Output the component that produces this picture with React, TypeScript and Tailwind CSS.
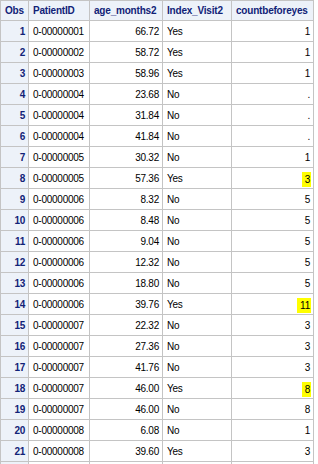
import React from 'react'

type Row = [number, string, string, string, string, boolean?]

const rows: Row[] = [
  [1, '0-00000001', '66.72', 'Yes', '1'],
  [2, '0-00000002', '58.72', 'Yes', '1'],
  [3, '0-00000003', '58.96', 'Yes', '1'],
  [4, '0-00000004', '23.68', 'No', '.'],
  [5, '0-00000004', '31.84', 'No', '.'],
  [6, '0-00000004', '41.84', 'No', '.'],
  [7, '0-00000005', '30.32', 'No', '1'],
  [8, '0-00000005', '57.36', 'Yes', '3', true],
  [9, '0-00000006', '8.32', 'No', '5'],
  [10, '0-00000006', '8.48', 'No', '5'],
  [11, '0-00000006', '9.04', 'No', '5'],
  [12, '0-00000006', '12.32', 'No', '5'],
  [13, '0-00000006', '18.80', 'No', '5'],
  [14, '0-00000006', '39.76', 'Yes', '11', true],
  [15, '0-00000007', '22.32', 'No', '3'],
  [16, '0-00000007', '27.36', 'No', '3'],
  [17, '0-00000007', '41.76', 'No', '3'],
  [18, '0-00000007', '46.00', 'Yes', '8', true],
  [19, '0-00000007', '46.00', 'No', '8'],
  [20, '0-00000008', '6.08', 'No', '1'],
  [21, '0-00000008', '39.60', 'Yes', '3'],
]

const cell = 'flex items-center border-r border-b border-[#c4c4c4]'
const head = `${cell} h-[20px] bg-[#edf2f9] text-[#112277] font-bold pl-[4px] tracking-[-0.2px]`

export default function App() {
  return (
    <div className="bg-white w-[318px] h-[464px] overflow-hidden" style={{ fontFamily: '"Liberation Sans", Arial, sans-serif' }}>
      <div className="grid grid-cols-[28px_61px_73px_69px_82px] w-[314px] border-l border-t border-[#c4c4c4] text-[10px] text-black tracking-[-0.25px]">
        <div className={`${head} pl-[3px]`}>Obs</div>
        <div className={head}>PatientID</div>
        <div className={head}>age_months2</div>
        <div className={head}>Index_Visit2</div>
        <div className={head}>countbeforeyes</div>

        {rows.map(([obs, id, age, idx, count, hl]) => (
          <React.Fragment key={obs}>
            <div className={`${cell} h-[21px] justify-end pr-[3px] bg-[#edf2f9] text-[#112277] font-bold`}>{obs}</div>
            <div className={`${cell} h-[21px] pl-[4px]`}>{id}</div>
            <div className={`${cell} h-[21px] justify-end pr-[3px]`}>{age}</div>
            <div className={`${cell} h-[21px] pl-[4px]`}>{idx}</div>
            <div className={`${cell} h-[21px] justify-end pr-[3px]`}>
              {hl ? (
                <span className="inline-block h-[15px] leading-[16px] mt-[3px] pl-[3px] pr-[1px] -mr-[1px] bg-[#ffff00]">{count}</span>
              ) : (
                count
              )}
            </div>
          </React.Fragment>
        ))}

        <div className={`${cell} h-[21px] bg-[#edf2f9]`} />
        <div className={`${cell} h-[21px]`} />
        <div className={`${cell} h-[21px]`} />
        <div className={`${cell} h-[21px]`} />
        <div className={`${cell} h-[21px]`} />
      </div>
    </div>
  )
}
